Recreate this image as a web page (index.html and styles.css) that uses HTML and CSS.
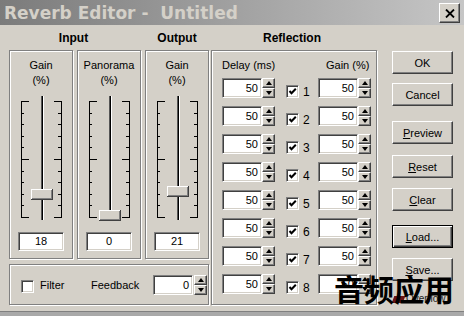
FILE: index.html
```html
<!DOCTYPE html>
<html>
<head>
<meta charset="utf-8">
<link rel="stylesheet" href="styles.css">
</head>
<body>
<div class="window">
  <div class="titlebar">
    <span class="title">Reverb Editor -  Untitled</span>
    <div class="close"><svg width="10" height="9" viewBox="0 0 10 9"><path d="M1 0.5 L9 8.5 M9 0.5 L1 8.5" stroke="#000" stroke-width="1.8" fill="none"/></svg></div>
  </div>
  <div class="body">
    <div class="left">
      <div class="heads">
        <div class="h h-input">Input</div>
        <div class="h h-output">Output</div>
      </div>
      <div class="sliders">
        <div class="group sp">
          <div class="cap">Gain<br>(%)</div>
          <svg class="slider" width="62" height="126" viewBox="0 0 62 126">
            <g fill="#000">
              <rect x="11" y="5" width="1" height="117"/><rect x="51" y="5" width="1" height="117"/>
              <rect x="11" y="5" width="8" height="1"/><rect x="44" y="5" width="8" height="1"/>
              <rect x="11" y="63" width="8" height="1"/><rect x="44" y="63" width="8" height="1"/>
              <rect x="11" y="121" width="8" height="1"/><rect x="44" y="121" width="8" height="1"/>
              <rect x="11" y="17" width="3" height="1"/><rect x="48" y="17" width="3" height="1"/>
              <rect x="11" y="28" width="3" height="1"/><rect x="48" y="28" width="3" height="1"/>
              <rect x="11" y="40" width="3" height="1"/><rect x="48" y="40" width="3" height="1"/>
              <rect x="11" y="51" width="3" height="1"/><rect x="48" y="51" width="3" height="1"/>
              <rect x="11" y="75" width="3" height="1"/><rect x="48" y="75" width="3" height="1"/>
              <rect x="11" y="86" width="3" height="1"/><rect x="48" y="86" width="3" height="1"/>
              <rect x="11" y="98" width="3" height="1"/><rect x="48" y="98" width="3" height="1"/>
              <rect x="11" y="109" width="3" height="1"/><rect x="48" y="109" width="3" height="1"/>
            </g>
            <rect x="31" y="0" width="1" height="124" fill="#555"/>
            <rect x="32" y="0" width="1" height="124" fill="#000"/>
            <rect x="33" y="0" width="1" height="124" fill="#fff"/>
            <g transform="translate(21,93)">
              <rect width="22" height="11" fill="#404040"/><rect width="21" height="10" fill="#fff"/>
              <rect x="1" y="1" width="20" height="9" fill="#808080"/><rect x="1" y="1" width="19" height="8" fill="#d4d0c8"/>
            </g>
          </svg>
          <div class="val">18</div>
        </div>
        <div class="group sp">
          <div class="cap">Panorama<br>(%)</div>
          <svg class="slider" width="62" height="126" viewBox="0 0 62 126">
            <g fill="#000">
              <rect x="11" y="5" width="1" height="117"/><rect x="51" y="5" width="1" height="117"/>
              <rect x="11" y="5" width="8" height="1"/><rect x="44" y="5" width="8" height="1"/>
              <rect x="11" y="63" width="8" height="1"/><rect x="44" y="63" width="8" height="1"/>
              <rect x="11" y="121" width="8" height="1"/><rect x="44" y="121" width="8" height="1"/>
              <rect x="11" y="17" width="3" height="1"/><rect x="48" y="17" width="3" height="1"/>
              <rect x="11" y="28" width="3" height="1"/><rect x="48" y="28" width="3" height="1"/>
              <rect x="11" y="40" width="3" height="1"/><rect x="48" y="40" width="3" height="1"/>
              <rect x="11" y="51" width="3" height="1"/><rect x="48" y="51" width="3" height="1"/>
              <rect x="11" y="75" width="3" height="1"/><rect x="48" y="75" width="3" height="1"/>
              <rect x="11" y="86" width="3" height="1"/><rect x="48" y="86" width="3" height="1"/>
              <rect x="11" y="98" width="3" height="1"/><rect x="48" y="98" width="3" height="1"/>
              <rect x="11" y="109" width="3" height="1"/><rect x="48" y="109" width="3" height="1"/>
            </g>
            <rect x="31" y="0" width="1" height="124" fill="#555"/>
            <rect x="32" y="0" width="1" height="124" fill="#000"/>
            <rect x="33" y="0" width="1" height="124" fill="#fff"/>
            <g transform="translate(21,114)">
              <rect width="22" height="11" fill="#404040"/><rect width="21" height="10" fill="#fff"/>
              <rect x="1" y="1" width="20" height="9" fill="#808080"/><rect x="1" y="1" width="19" height="8" fill="#d4d0c8"/>
            </g>
          </svg>
          <div class="val">0</div>
        </div>
        <div class="group sp">
          <div class="cap">Gain<br>(%)</div>
          <svg class="slider" width="62" height="126" viewBox="0 0 62 126">
            <g fill="#000">
              <rect x="11" y="5" width="1" height="117"/><rect x="51" y="5" width="1" height="117"/>
              <rect x="11" y="5" width="8" height="1"/><rect x="44" y="5" width="8" height="1"/>
              <rect x="11" y="63" width="8" height="1"/><rect x="44" y="63" width="8" height="1"/>
              <rect x="11" y="121" width="8" height="1"/><rect x="44" y="121" width="8" height="1"/>
              <rect x="11" y="17" width="3" height="1"/><rect x="48" y="17" width="3" height="1"/>
              <rect x="11" y="28" width="3" height="1"/><rect x="48" y="28" width="3" height="1"/>
              <rect x="11" y="40" width="3" height="1"/><rect x="48" y="40" width="3" height="1"/>
              <rect x="11" y="51" width="3" height="1"/><rect x="48" y="51" width="3" height="1"/>
              <rect x="11" y="75" width="3" height="1"/><rect x="48" y="75" width="3" height="1"/>
              <rect x="11" y="86" width="3" height="1"/><rect x="48" y="86" width="3" height="1"/>
              <rect x="11" y="98" width="3" height="1"/><rect x="48" y="98" width="3" height="1"/>
              <rect x="11" y="109" width="3" height="1"/><rect x="48" y="109" width="3" height="1"/>
            </g>
            <rect x="31" y="0" width="1" height="124" fill="#555"/>
            <rect x="32" y="0" width="1" height="124" fill="#000"/>
            <rect x="33" y="0" width="1" height="124" fill="#fff"/>
            <g transform="translate(21,90)">
              <rect width="22" height="11" fill="#404040"/><rect width="21" height="10" fill="#fff"/>
              <rect x="1" y="1" width="20" height="9" fill="#808080"/><rect x="1" y="1" width="19" height="8" fill="#d4d0c8"/>
            </g>
          </svg>
          <div class="val">21</div>
        </div>
      </div>
      <div class="group filter">
        <span class="cb"></span>
        <span class="f-label">Filter</span>
        <span class="fb-label">Feedback</span>
        <span class="in in-fb">0</span>
        <span class="spin spin-fb"><b><i class="up"></i></b><b><i class="dn"></i></b></span>
      </div>
    </div>

    <div class="mid">
      <div class="h h-refl">Reflection</div>
      <div class="group refl">
        <div class="rhead"><span class="rh-delay">Delay (ms)</span><span>Gain (%)</span></div>
        <div class="rows">
          <div class="row"><span class="in">50</span><span class="spin"><b><i class="up"></i></b><b><i class="dn"></i></b></span><span class="cb on"><svg width="9" height="9" viewBox="0 0 9 9"><polyline points="1.5,4 3.5,6.2 7.8,1.8" fill="none" stroke="#000" stroke-width="2"/></svg></span><span class="num">1</span><span class="in in-g">50</span><span class="spin"><b><i class="up"></i></b><b><i class="dn"></i></b></span></div>
          <div class="row"><span class="in">50</span><span class="spin"><b><i class="up"></i></b><b><i class="dn"></i></b></span><span class="cb on"><svg width="9" height="9" viewBox="0 0 9 9"><polyline points="1.5,4 3.5,6.2 7.8,1.8" fill="none" stroke="#000" stroke-width="2"/></svg></span><span class="num">2</span><span class="in in-g">50</span><span class="spin"><b><i class="up"></i></b><b><i class="dn"></i></b></span></div>
          <div class="row"><span class="in">50</span><span class="spin"><b><i class="up"></i></b><b><i class="dn"></i></b></span><span class="cb on"><svg width="9" height="9" viewBox="0 0 9 9"><polyline points="1.5,4 3.5,6.2 7.8,1.8" fill="none" stroke="#000" stroke-width="2"/></svg></span><span class="num">3</span><span class="in in-g">50</span><span class="spin"><b><i class="up"></i></b><b><i class="dn"></i></b></span></div>
          <div class="row"><span class="in">50</span><span class="spin"><b><i class="up"></i></b><b><i class="dn"></i></b></span><span class="cb on"><svg width="9" height="9" viewBox="0 0 9 9"><polyline points="1.5,4 3.5,6.2 7.8,1.8" fill="none" stroke="#000" stroke-width="2"/></svg></span><span class="num">4</span><span class="in in-g">50</span><span class="spin"><b><i class="up"></i></b><b><i class="dn"></i></b></span></div>
          <div class="row"><span class="in">50</span><span class="spin"><b><i class="up"></i></b><b><i class="dn"></i></b></span><span class="cb on"><svg width="9" height="9" viewBox="0 0 9 9"><polyline points="1.5,4 3.5,6.2 7.8,1.8" fill="none" stroke="#000" stroke-width="2"/></svg></span><span class="num">5</span><span class="in in-g">50</span><span class="spin"><b><i class="up"></i></b><b><i class="dn"></i></b></span></div>
          <div class="row"><span class="in">50</span><span class="spin"><b><i class="up"></i></b><b><i class="dn"></i></b></span><span class="cb on"><svg width="9" height="9" viewBox="0 0 9 9"><polyline points="1.5,4 3.5,6.2 7.8,1.8" fill="none" stroke="#000" stroke-width="2"/></svg></span><span class="num">6</span><span class="in in-g">50</span><span class="spin"><b><i class="up"></i></b><b><i class="dn"></i></b></span></div>
          <div class="row"><span class="in">50</span><span class="spin"><b><i class="up"></i></b><b><i class="dn"></i></b></span><span class="cb on"><svg width="9" height="9" viewBox="0 0 9 9"><polyline points="1.5,4 3.5,6.2 7.8,1.8" fill="none" stroke="#000" stroke-width="2"/></svg></span><span class="num">7</span><span class="in in-g">50</span><span class="spin"><b><i class="up"></i></b><b><i class="dn"></i></b></span></div>
          <div class="row"><span class="in">50</span><span class="spin"><b><i class="up"></i></b><b><i class="dn"></i></b></span><span class="cb on"><svg width="9" height="9" viewBox="0 0 9 9"><polyline points="1.5,4 3.5,6.2 7.8,1.8" fill="none" stroke="#000" stroke-width="2"/></svg></span><span class="num">8</span><span class="in in-g">50</span><span class="spin"><b><i class="up"></i></b><b><i class="dn"></i></b></span></div>
        </div>
      </div>
    </div>

    <div class="buttons">
      <div class="btn b-ok">OK</div>
      <div class="btn b-cancel">Cancel</div>
      <div class="btn b-preview"><u>P</u>review</div>
      <div class="btn b-reset"><u>R</u>eset</div>
      <div class="btn b-clear"><u>C</u>lear</div>
      <div class="btn b-load"><u>L</u>oad...</div>
      <div class="btn b-save"><u>S</u>ave...</div>
    </div>
  </div>
  <div class="foot"></div>

  <div class="wm-mark"></div>
  <div class="wm-over">Overflow</div>
  <div class="watermark">音频应用</div>
</div>
</body>
</html>
```

FILE: styles.css
```css
* { box-sizing: border-box; margin: 0; padding: 0; }
html, body { width: 464px; height: 316px; overflow: hidden; }
body {
  background: #d4d0c8;
  font-family: "Liberation Sans", Arial, sans-serif;
  font-size: 11px;
  color: #000;
}
.window { position: relative; width: 464px; height: 316px; background: #d4d0c8; }

.titlebar {
  height: 25px;
  background: linear-gradient(to right, #7b7b7b, #c6c6c6);
  display: flex;
  align-items: flex-start;
  justify-content: space-between;
  padding: 0 4px;
}
.title {
  font-family: "DejaVu Sans", Verdana, sans-serif;
  font-weight: bold;
  font-size: 17px;
  line-height: 25px;
  padding-top: 1px;
  color: #d4d0c8;
  white-space: pre;
}
.close {
  width: 21px; height: 20px;
  margin-top: 3px;
  background: #d4d0c8;
  border: 1px solid;
  border-color: #fff #404040 #404040 #fff;
  box-shadow: inset -1px -1px 0 #808080;
  display: flex; align-items: center; justify-content: center;
}

.body { display: flex; padding-left: 9px; height: 286px; }
.left { width: 200px; display: flex; flex-direction: column; }
.heads { display: flex; height: 25px; }
.h {
  font-weight: bold; font-size: 12px;
  line-height: 23px; padding-top: 2px; height: 25px;
  text-align: center;
}
.h-input { width: 129px; }
.h-output { width: 64px; margin-left: auto; }

.group {
  border: 1px solid #808080;
  box-shadow: inset 1px 1px 0 #fff, 1px 1px 0 #fff;
}
.sliders { display: flex; gap: 4px; height: 209px; }
.sp { width: 64px; display: flex; flex-direction: column; align-items: center; padding-top: 7px; }
.cap { text-align: center; line-height: 15px; }
.slider { display: block; margin-top: 8px; }
.val {
  margin-top: 10px;
  width: 46px; height: 19px;
  background: #fff;
  border: 1px solid;
  border-color: #808080 #fff #fff #808080;
  box-shadow: inset 1px 1px 0 #404040, inset -1px -1px 0 #d4d0c8;
  text-align: center; line-height: 17px;
}

.filter {
  margin-top: 5px; height: 41px;
  display: flex; align-items: center;
  padding-left: 11px;
}
.filter .cb { margin-top: 3px; }
.f-label { width: 57px; padding-left: 6px; }
.fb-label { width: 62px; }
.in-fb { width: 35px; height: 22px; line-height: 20px; }
.spin-fb { margin-left: 1px; height: 23px; }

.cb {
  width: 13px; height: 13px;
  background: #fff;
  border: 1px solid;
  border-color: #808080 #fff #fff #808080;
  box-shadow: inset 1px 1px 0 #404040, inset -1px -1px 0 #d4d0c8;
  display: flex; align-items: center; justify-content: center;
  flex: none;
}
.cb svg { display: block; }

.in {
  width: 40px; height: 20px;
  background: #fff;
  border: 1px solid;
  border-color: #808080 #fff #fff #808080;
  box-shadow: inset 1px 1px 0 #404040, inset -1px -1px 0 #d4d0c8;
  text-align: right; padding-right: 3px;
  line-height: 18px;
  flex: none;
}
.spin { width: 13px; height: 20px; display: flex; flex-direction: column; flex: none; }
.spin b {
  flex: 1;
  background: #d4d0c8;
  border: 1px solid;
  border-color: #fff #404040 #404040 #fff;
  box-shadow: inset -1px -1px 0 #808080;
  display: flex; align-items: center; justify-content: center;
}
.spin i { display: block; width: 1px; height: 0; border-left: 3px solid transparent; border-right: 3px solid transparent; }
.spin i.up { border-bottom: 4px solid #000; }
.spin i.dn { border-top: 4px solid #000; }

.mid { margin-left: 2px; width: 166px; display: flex; flex-direction: column; }
.h-refl { padding-right: 4px; }
.refl { height: 255px; padding: 7px 0 0 10px; }
.rhead { display: flex; line-height: 15px; }
.rh-delay { width: 104px; }
.rows { display: flex; flex-direction: column; gap: 8px; margin-top: 5px; }
.row { display: flex; height: 20px; }
.row .cb { margin-left: 11px; align-self: flex-end; }
.num { width: 10px; margin-left: 4px; align-self: flex-end; line-height: 12px; font-size: 12px; }
.in-g { margin-left: 5px; }

.buttons { margin-left: 15px; width: 61px; padding-top: 26px; display: flex; flex-direction: column; }
.btn {
  width: 61px; height: 23px;
  background: #d4d0c8;
  border: 1px solid;
  border-color: #fff #404040 #404040 #fff;
  box-shadow: inset -1px -1px 0 #808080;
  display: flex; align-items: center; justify-content: center;
  font-size: 11px;
}
.btn u { text-decoration: underline; text-underline-offset: 1px; }
.b-cancel { margin-top: 9px; }
.b-preview { margin-top: 15px; }
.b-reset { margin-top: 11px; }
.b-clear { margin-top: 10px; }
.b-load {
  margin-top: 14px;
  border-color: #000;
  box-shadow: inset 1px 1px 0 #fff, inset -1px -1px 0 #404040, inset -2px -2px 0 #808080;
}
.b-save { margin-top: 10px; }

.foot { height: 5px; border-top: 1px solid #808080; background: #a9a9a9; }

.watermark {
  position: absolute; left: 334px; top: 271px;
  font-family: "Noto Sans CJK SC", sans-serif;
  font-weight: bold; font-size: 30px; line-height: 34px;
  color: #000; letter-spacing: 0;
}
.wm-over {
  position: absolute; left: 406px; top: 293px;
  font-size: 10px; line-height: 11px; color: #222;
}
.wm-mark {
  position: absolute; left: 393px; top: 296px;
  width: 11px; height: 7px; background: #6b1414;
  transform: skewX(-20deg);
}
```
